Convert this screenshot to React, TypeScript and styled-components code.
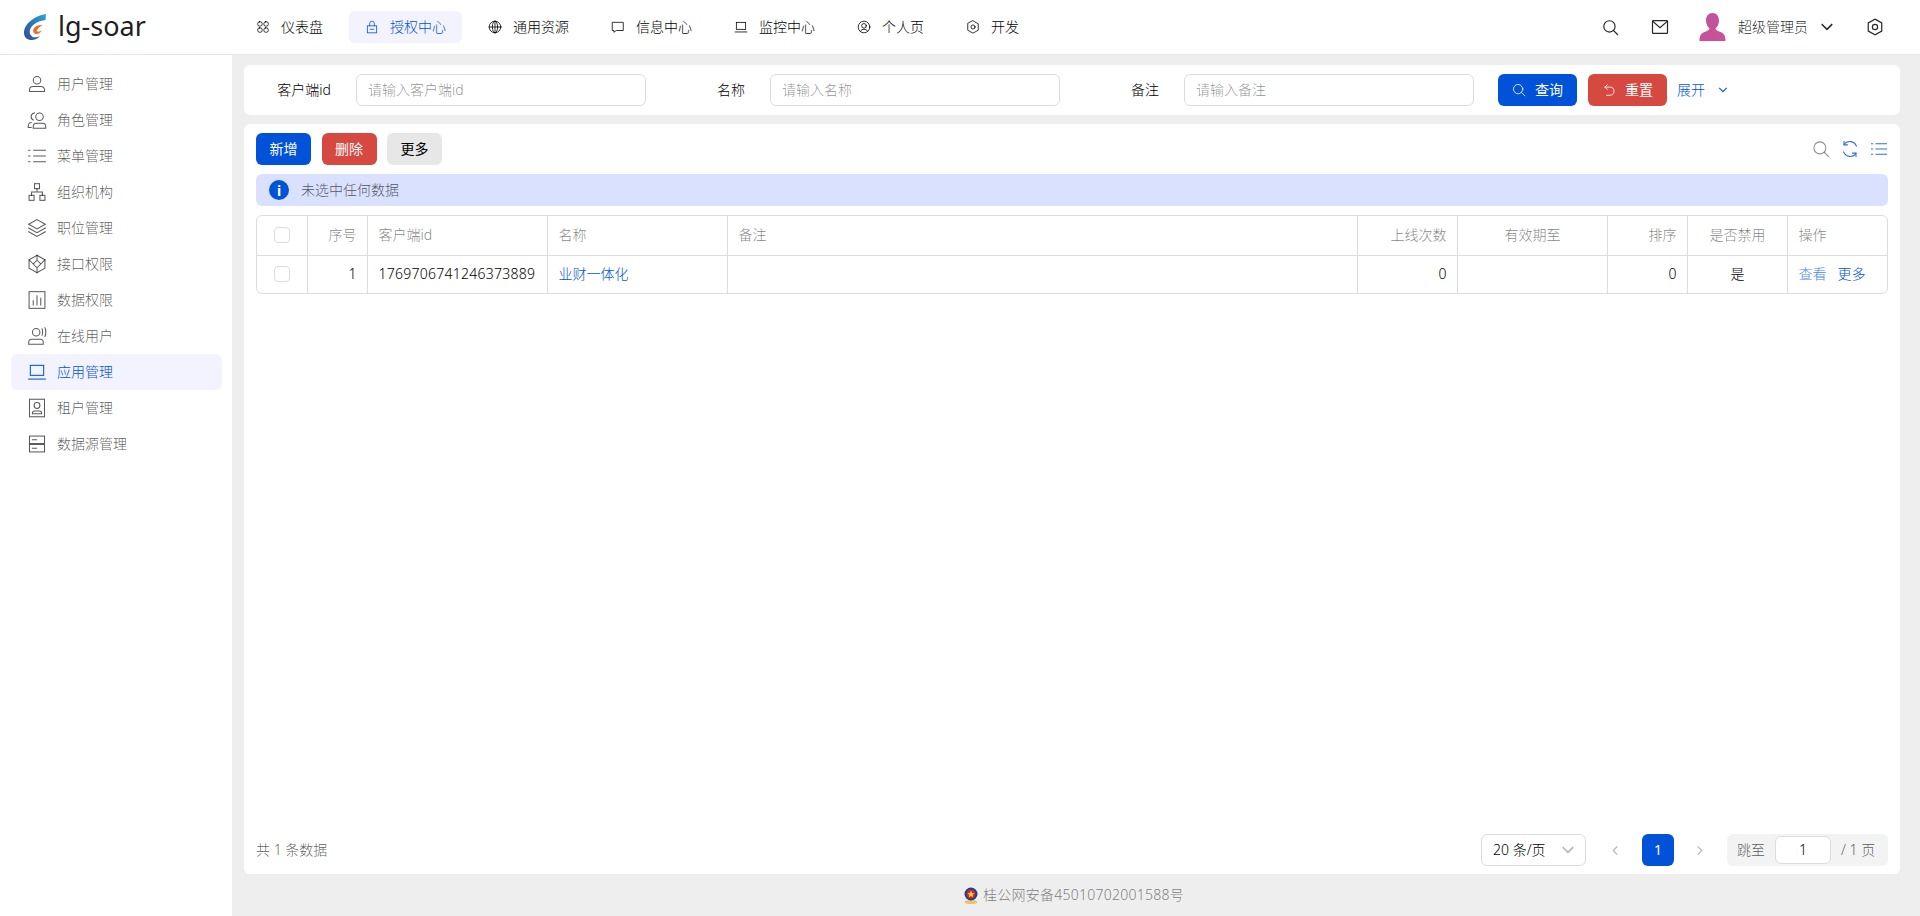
import React from 'react';
import styled, { createGlobalStyle } from 'styled-components';

const GlobalStyle = createGlobalStyle`
  html, body, #root { margin: 0; padding: 0; height: 100%; }
  body {
    font-family: "Noto Sans", "Noto Sans CJK SC", sans-serif;
    font-size: 14px;
    font-weight: 300;
    color: #000;
    background: #eeeeee;
    overflow: hidden;
  }
  * { box-sizing: border-box; }
`;

const Glyph = styled.svg<{ $size?: number }>`
  width: ${({ $size }) => $size ?? 16}px;
  height: ${({ $size }) => $size ?? 16}px;
  flex: none;
  fill: none;
  stroke: currentColor;
  stroke-width: 1.4;
  stroke-linecap: square;
  stroke-linejoin: miter;
`;

type IconName =
  | 'dashboard' | 'lock' | 'globe' | 'chat' | 'laptop' | 'userCircle' | 'setting'
  | 'user' | 'users' | 'list' | 'tree' | 'layers' | 'cube' | 'chart' | 'online'
  | 'idCard' | 'server' | 'search' | 'mail' | 'down' | 'undo' | 'refresh' | 'left' | 'right';

const paths: Record<IconName, React.ReactNode> = {
  dashboard: (
    <>
      <rect x="3" y="3" width="7.5" height="7.5" rx="3" />
      <rect x="13.5" y="3" width="7.5" height="7.5" rx="3" />
      <rect x="3" y="13.5" width="7.5" height="7.5" rx="3" />
      <rect x="13.5" y="13.5" width="7.5" height="7.5" rx="3" />
    </>
  ),
  lock: (
    <>
      <rect x="4" y="10" width="16" height="12" />
      <path d="M8 10V6a4 4 0 0 1 8 0v4M9 16h6" />
    </>
  ),
  globe: (
    <>
      <circle cx="12" cy="12" r="10" />
      <ellipse cx="12" cy="12" rx="4.5" ry="10" />
      <path d="M2 12h20M12 2v20" />
    </>
  ),
  chat: <path d="M3 4h18v14H9l-4 3v-3H3z" />,
  laptop: (
    <>
      <rect x="4" y="4" width="16" height="12" />
      <path d="M2 20.5h20" />
    </>
  ),
  userCircle: (
    <>
      <circle cx="12" cy="12" r="10" />
      <circle cx="12" cy="10" r="4" />
      <path d="M6 19c1.5-2.5 3.5-3 6-3s4.500.5 6 3" />
    </>
  ),
  setting: (
    <>
      <path d="M12 1.500 21 6.500v11L12 22.500 3 17.500v-11z" />
      <circle cx="12" cy="12" r="3.500" />
    </>
  ),
  user: (
    <>
      <circle cx="12" cy="7.500" r="4.500" />
      <path d="M3 21v-2c0-2.500 2-4 4.500-4h9c2.500 0 4.500 1.500 4.500 4v2z" />
    </>
  ),
  users: (
    <>
      <circle cx="15" cy="8" r="4.500" />
      <path d="M7.500 22v-2c0-2.500 2-4 4-4h7c2 0 4 1.500 4 4v2z" />
      <path d="M9 3.500A4.500 4.500 0 0 0 7.500 12M5 21H1.500v-2c0-2 1.500-4 3.500-4" />
    </>
  ),
  list: <path d="M8 5h14M8 12h14M8 19h14M2 5h1.500M2 12h1.500M2 19h1.500" />,
  tree: (
    <>
      <rect x="9" y="2" width="6" height="6" />
      <rect x="2.500" y="16" width="6" height="6" />
      <rect x="15.500" y="16" width="6" height="6" />
      <path d="M12 8v4M5.500 16v-4h13v4" />
    </>
  ),
  layers: (
    <>
      <path d="M12 2 22 7.500 12 13 2 7.500z" />
      <path d="M2 12l10 5.500L22 12M2 16.500 12 22l10-5.500" />
    </>
  ),
  cube: (
    <>
      <path d="M12 1.500 21.500 7v10L12 22.500 2.500 17V7z" />
      <path d="M12 7.500 16.500 12 12 16.500 7.500 12zM2.500 7 7.500 12M21.500 7 16.500 12M12 16.500v6M12 1.500v6" />
    </>
  ),
  chart: (
    <>
      <rect x="2.500" y="2" width="19" height="20" />
      <path d="M7.500 18v-5M12 18V7M16.500 18v-8" />
    </>
  ),
  online: (
    <>
      <circle cx="11" cy="7.500" r="4.500" />
      <path d="M2 22v-2c0-2.500 2-4 4-4h10c2 0 3.500 1.500 3.500 4v2z" />
      <path d="M18 3.500c1 1 1 6 0 7.500M21.500 2c1.500 2.500 1.500 8 0 10.500" />
    </>
  ),
  idCard: (
    <>
      <rect x="3" y="1.500" width="18" height="21" />
      <circle cx="12" cy="9" r="3.500" />
      <path d="M6.500 19v-1c0-1.500 1-2.500 2.500-2.500h6c1.500 0 2.500 1 2.500 2.500v1z" />
    </>
  ),
  server: (
    <>
      <rect x="3" y="2.500" width="18" height="9" />
      <rect x="3" y="12.500" width="18" height="9" />
      <path d="M6.500 7h5M6.500 17h5" />
    </>
  ),
  search: (
    <>
      <circle cx="10.500" cy="10.500" r="8" />
      <path d="m16.500 16.500 5.500 5.500" />
    </>
  ),
  mail: (
    <>
      <rect x="2" y="3.500" width="20" height="17" rx="1" />
      <path d="m3 5 9 8 9-8" />
    </>
  ),
  down: <path d="m4 8 8 8 8-8" strokeWidth="2.600" />,
  undo: <path d="M9 3 5 7l4 4M5 7h8.500a6.500 6.500 0 0 1 0 14H8" />,
  refresh: (
    <>
      <path d="M20.500 8A9.500 9.500 0 0 0 4 6M3.500 16A9.500 9.500 0 0 0 20 18" />
      <path d="M4 2v4.500h4.500M20 22v-4.500h-4.500" />
    </>
  ),
  left: <path d="M15 4 7 12l8 8" strokeWidth="2.400" />,
  right: <path d="m9 4 8 8-8 8" strokeWidth="2.400" />,
};

const Icon = ({ name, size }: { name: IconName; size?: number }) => (
  <Glyph viewBox="0 0 24 24" $size={size}>
    {paths[name]}
  </Glyph>
);

const navItems: { label: string; icon: IconName; active?: boolean }[] = [
  { label: '仪表盘', icon: 'dashboard' },
  { label: '授权中心', icon: 'lock', active: true },
  { label: '通用资源', icon: 'globe' },
  { label: '信息中心', icon: 'chat' },
  { label: '监控中心', icon: 'laptop' },
  { label: '个人页', icon: 'userCircle' },
  { label: '开发', icon: 'setting' },
];

const menuItems: { label: string; icon: IconName; active?: boolean }[] = [
  { label: '用户管理', icon: 'user' },
  { label: '角色管理', icon: 'users' },
  { label: '菜单管理', icon: 'list' },
  { label: '组织机构', icon: 'tree' },
  { label: '职位管理', icon: 'layers' },
  { label: '接口权限', icon: 'cube' },
  { label: '数据权限', icon: 'chart' },
  { label: '在线用户', icon: 'online' },
  { label: '应用管理', icon: 'laptop', active: true },
  { label: '租户管理', icon: 'idCard' },
  { label: '数据源管理', icon: 'server' },
];

const searchFields = [
  { label: '客户端id', placeholder: '请输入客户端id' },
  { label: '名称', placeholder: '请输入名称' },
  { label: '备注', placeholder: '请输入备注' },
];

type Align = 'left' | 'right' | 'center';

const columns: { title: string; width: number; align: Align }[] = [
  { title: '序号', width: 60, align: 'right' },
  { title: '客户端id', width: 180, align: 'left' },
  { title: '名称', width: 180, align: 'left' },
  { title: '备注', width: 630, align: 'left' },
  { title: '上线次数', width: 100, align: 'right' },
  { title: '有效期至', width: 150, align: 'center' },
  { title: '排序', width: 80, align: 'right' },
  { title: '是否禁用', width: 100, align: 'center' },
  { title: '操作', width: 100, align: 'left' },
];

const Page = styled.div`
  height: 100vh;
  display: flex;
  flex-direction: column;
`;

// the CJK glyphs sit a little low in their line box, this lifts them next to icons
const Txt = styled.span`
  margin-top: -2px;
  white-space: nowrap;
`;

const Header = styled.header`
  height: 55px;
  flex: none;
  display: flex;
  align-items: center;
  background: #fff;
  border-bottom: 1px solid #e7e7e7;
`;

const Logo = styled.div`
  width: 240px;
  flex: none;
  display: flex;
  align-items: center;
  gap: 12px;
  padding-left: 24px;
`;

const LogoText = styled(Txt)`
  font-size: 27px;
  font-weight: 400;
  line-height: 34px;
  color: rgba(0, 0, 0, 0.9);
`;

const Nav = styled.nav`
  flex: 1;
  display: flex;
  gap: 10px;
  svg { stroke-width: 1.35; }
`;

const NavItem = styled.div<{ $active?: boolean }>`
  height: 32px;
  display: flex;
  align-items: center;
  gap: 11px;
  padding: 0 16px;
  border-radius: 6px;
  background: ${({ $active }) => ($active ? '#f2f3ff' : 'transparent')};
  color: ${({ $active }) => ($active ? '#0052d9' : '#000')};
`;

const HeaderTools = styled.div`
  display: flex;
  align-items: center;
  padding-right: 36px;
  color: rgba(0, 0, 0, 0.85);
  svg { stroke-width: 1.6; }
`;

const ToolSlot = styled.span<{ $gap: number }>`
  display: flex;
  margin-right: ${({ $gap }) => $gap}px;
`;

const Profile = styled.div`
  display: flex;
  align-items: center;
  gap: 12px;
  margin-right: 32px;
`;

const Body = styled.div`
  flex: 1;
  min-height: 0;
  display: flex;
`;

const Sidebar = styled.aside`
  width: 232px;
  flex: none;
  background: #fff;
  padding: 11px 10px 0 11px;
  svg { stroke-width: 1.25; }
`;

const MenuItem = styled.div<{ $active?: boolean }>`
  height: 36px;
  display: flex;
  align-items: center;
  gap: 10px;
  padding-left: 16px;
  border-radius: 6px;
  background: ${({ $active }) => ($active ? '#f2f3ff' : 'transparent')};
  color: ${({ $active }) => ($active ? '#0052d9' : 'rgba(0, 0, 0, 0.65)')};
`;

const Main = styled.main`
  flex: 1;
  min-width: 0;
  display: flex;
  flex-direction: column;
  padding: 10px 20px 0 12px;
`;

const Card = styled.section`
  background: #fff;
  border-radius: 6px;
`;

const SearchCard = styled(Card)`
  height: 50px;
  flex: none;
  display: flex;
  align-items: center;
  padding: 0 12px;
  margin-bottom: 9px;
`;

const Field = styled.div`
  width: 414px;
  flex: none;
  display: flex;
  align-items: center;
`;

const FieldLabel = styled(Txt)`
  width: 100px;
  padding-right: 25px;
  text-align: right;
`;

const TextBox = styled.div`
  width: 290px;
  height: 32px;
  display: flex;
  align-items: center;
  padding: 0 11px;
  border: 1px solid #dcdcdc;
  border-radius: 6px;
  color: rgba(0, 0, 0, 0.45);
`;

const Button = styled.button<{ $tone?: 'primary' | 'danger' | 'plain' }>`
  height: 32px;
  display: inline-flex;
  align-items: center;
  justify-content: center;
  gap: 9px;
  padding: 0;
  border: 0;
  border-radius: 6px;
  font: inherit;
  font-weight: 400;
  background: ${({ $tone }) => ($tone === 'primary' ? '#0052d9' : $tone === 'danger' ? '#d54941' : '#e7e7e7')};
  color: ${({ $tone }) => ($tone === 'plain' ? '#000' : '#fff')};
`;

const SearchButton = styled(Button)`
  width: 79px;
  & + & { margin-left: 11px; }
`;

const Expand = styled.div`
  display: flex;
  align-items: center;
  gap: 13px;
  margin-left: 10px;
  color: #0052d9;
`;

const TableCard = styled(Card)`
  flex: 1;
  min-height: 0;
  display: flex;
  flex-direction: column;
  padding: 9px 12px 8px;
`;

const Toolbar = styled.div`
  height: 32px;
  display: flex;
  align-items: center;
  gap: 10.5px;
  margin-bottom: 9px;
`;

const ToolButton = styled(Button)`
  width: 55px;
`;

const TableTools = styled.div`
  margin-left: auto;
  display: flex;
  align-items: center;
  gap: 11px;
  color: #2f6fe0;
`;

const MutedIcon = styled.span`
  display: flex;
  color: rgba(0, 0, 0, 0.45);
`;

const Notice = styled.div`
  height: 32px;
  display: flex;
  align-items: center;
  gap: 12px;
  padding-left: 13px;
  margin-bottom: 9px;
  border-radius: 6px;
  background: #d9e1ff;
  color: rgba(0, 0, 0, 0.65);
`;

const InfoDot = styled.span`
  width: 20px;
  height: 20px;
  border-radius: 50%;
  display: flex;
  align-items: center;
  justify-content: center;
  background: #0052d9;
  color: #fff;
  font-size: 14px;
  font-weight: 700;
`;

const TableWrap = styled.div`
  border: 1px solid #dcdcdc;
  border-radius: 6px;
  overflow: hidden;
`;

const Table = styled.table`
  width: 100%;
  table-layout: fixed;
  border-collapse: collapse;
`;

const HeadCell = styled.th<{ $align?: Align }>`
  height: 39px;
  padding: 0 10px 2px 11px;
  font-weight: 300;
  text-align: ${({ $align }) => $align ?? 'left'};
  color: rgba(0, 0, 0, 0.5);
  border-left: 1px solid #dcdcdc;
  border-bottom: 1px solid #dcdcdc;
  &:first-child { border-left: 0; }
`;

const Cell = styled.td<{ $align?: Align }>`
  height: 38px;
  padding: 0 10px 2px 11px;
  text-align: ${({ $align }) => $align ?? 'left'};
  white-space: nowrap;
  border-left: 1px solid #dcdcdc;
  &:first-child { border-left: 0; }
`;

const Digits = styled.span`
  letter-spacing: 0.25px;
`;

const Check = styled.span`
  display: block;
  width: 16px;
  height: 16px;
  margin: 2px auto 0;
  border: 1px solid #dcdcdc;
  border-radius: 4px;
  background: #fff;
`;

const LinkText = styled.a<{ $light?: boolean }>`
  color: ${({ $light }) => ($light ? '#4787f0' : '#0052d9')};
  & + & { margin-left: 11px; }
`;

const Pagination = styled.div`
  margin-top: auto;
  height: 32px;
  display: flex;
  align-items: center;
  color: rgba(0, 0, 0, 0.65);
`;

const Total = styled(Txt)`
  margin-right: auto;
`;

const SizeSelect = styled.div`
  width: 105px;
  height: 32px;
  display: flex;
  align-items: center;
  justify-content: space-between;
  padding: 0 10px 0 11px;
  border: 1px solid #dcdcdc;
  border-radius: 6px;
  color: #000;
`;

const Arrow = styled.span`
  display: flex;
  color: rgba(0, 0, 0, 0.3);
`;

const PrevArrow = styled(Arrow)`
  margin-left: 24px;
`;

const PageNo = styled.span`
  width: 32px;
  height: 32px;
  margin: 0 20px 0 21px;
  display: flex;
  align-items: center;
  justify-content: center;
  border-radius: 6px;
  background: #0052d9;
  color: #fff;
  font-weight: 400;
`;

const Jumper = styled.div`
  width: 161px;
  height: 32px;
  margin-left: 22px;
  display: flex;
  align-items: center;
  padding: 0 10px;
  gap: 10px;
  border-radius: 6px;
  background: #f3f3f3;
`;

const JumpInput = styled.span`
  width: 56px;
  height: 28px;
  display: flex;
  align-items: center;
  justify-content: center;
  background: #fff;
  border: 1px solid #dcdcdc;
  border-radius: 6px;
  color: #000;
`;

const Footer = styled.footer`
  height: 42px;
  flex: none;
  display: flex;
  align-items: center;
  justify-content: center;
  gap: 5px;
  padding-left: 4px;
  color: rgba(0, 0, 0, 0.5);
`;

const LogoMark = () => (
  <svg width="22" height="26" viewBox="0 0 22 26">
    <defs>
      <linearGradient id="logoBlue" x1="1" y1="0" x2="0" y2="1">
        <stop offset="0" stopColor="#27a5dc" />
        <stop offset="0.6" stopColor="#2a6db4" />
        <stop offset="1" stopColor="#3b4a94" />
      </linearGradient>
    </defs>
    <path d="M22 0C10 2 0 10 0 19c0 4.500 3.500 7 7.500 7 3.500 0 6.500-1.500 8.500-4-2.500 1.200-6 2-8 .5-2.500-2-3-5-1.500-8C9 9.500 15 7 21.500 6z" fill="url(#logoBlue)" />
    <path d="M19 11c-4-.5-8 .5-9.500 4-1 2.500.5 5 3 5 2.500 0 4-1.500 5-3.500-1.500 1-3.500 1.500-5 .8 1-3 3.500-5 6.500-6.300z" fill="#ef6b2d" />
  </svg>
);

const Avatar = () => (
  <svg width="27" height="28" viewBox="0 0 26 28">
    <defs>
      <linearGradient id="avatarFill" x1="0" y1="0" x2="1" y2="1">
        <stop offset="0" stopColor="#b9559c" />
        <stop offset="1" stopColor="#d04f9a" />
      </linearGradient>
    </defs>
    <path d="M13 0c4 0 6.500 3 6.500 7.500 0 3.500-1.500 6.500-3.500 8 .5 1.500 2 2.500 5 3.500 3 1 5 3 5 9H0c0-6 2-8 5-9 3-1 4.500-2 5-3.500-2-1.500-3.500-4.500-3.500-8C6.500 3 9 0 13 0z" fill="url(#avatarFill)" />
  </svg>
);

const PoliceBadge = () => (
  <svg width="14" height="17" viewBox="0 0 14 17">
    <ellipse cx="7" cy="15" rx="6.500" ry="2" fill="#e5c46b" />
    <circle cx="7" cy="7" r="6.500" fill="#1c3f8f" />
    <circle cx="7" cy="7" r="4.500" fill="#d52b1e" />
    <path d="M7 3.500 8 6l2.500.2-2 1.600.7 2.500L7 9l-2.200 1.300.7-2.500-2-1.600L6 6z" fill="#f6d24a" />
  </svg>
);

export default function App() {
  return (
    <Page>
      <GlobalStyle />
      <Header>
        <Logo>
          <LogoMark />
          <LogoText>lg-soar</LogoText>
        </Logo>
        <Nav>
          {navItems.map(item => (
            <NavItem key={item.label} $active={item.active}>
              <Icon name={item.icon} size={14} />
              <Txt>{item.label}</Txt>
            </NavItem>
          ))}
        </Nav>
        <HeaderTools>
          <ToolSlot $gap={32}><Icon name="search" size={17} /></ToolSlot>
          <ToolSlot $gap={30}><Icon name="mail" size={18} /></ToolSlot>
          <Profile>
            <Avatar />
            <Txt>超级管理员</Txt>
            <Icon name="down" size={14} />
          </Profile>
          <Icon name="setting" size={18} />
        </HeaderTools>
      </Header>
      <Body>
        <Sidebar>
          {menuItems.map(item => (
            <MenuItem key={item.label} $active={item.active}>
              <Icon name={item.icon} size={20} />
              <Txt>{item.label}</Txt>
            </MenuItem>
          ))}
        </Sidebar>
        <Main>
          <SearchCard>
            {searchFields.map(field => (
              <Field key={field.label}>
                <FieldLabel>{field.label}</FieldLabel>
                <TextBox><Txt>{field.placeholder}</Txt></TextBox>
              </Field>
            ))}
            <SearchButton $tone="primary"><Icon name="search" size={14} /><Txt>查询</Txt></SearchButton>
            <SearchButton $tone="danger"><Icon name="undo" size={14} /><Txt>重置</Txt></SearchButton>
            <Expand><Txt>展开</Txt><Icon name="down" size={10} /></Expand>
          </SearchCard>
          <TableCard>
            <Toolbar>
              <ToolButton $tone="primary"><Txt>新增</Txt></ToolButton>
              <ToolButton $tone="danger"><Txt>删除</Txt></ToolButton>
              <ToolButton $tone="plain"><Txt>更多</Txt></ToolButton>
              <TableTools>
                <MutedIcon><Icon name="search" size={18} /></MutedIcon>
                <Icon name="refresh" size={18} />
                <Icon name="list" size={18} />
              </TableTools>
            </Toolbar>
            <Notice>
              <InfoDot>i</InfoDot>
              <Txt>未选中任何数据</Txt>
            </Notice>
            <TableWrap>
              <Table>
                <colgroup>
                  <col style={{ width: 50 }} />
                  {columns.map(col => (
                    <col key={col.title} style={{ width: col.width }} />
                  ))}
                </colgroup>
                <thead>
                  <tr>
                    <HeadCell $align="center"><Check /></HeadCell>
                    {columns.map(col => (
                      <HeadCell key={col.title} $align={col.align}>{col.title}</HeadCell>
                    ))}
                  </tr>
                </thead>
                <tbody>
                  <tr>
                    <Cell $align="center"><Check /></Cell>
                    <Cell $align="right">1</Cell>
                    <Cell><Digits>1769706741246373889</Digits></Cell>
                    <Cell><LinkText>业财一体化</LinkText></Cell>
                    <Cell />
                    <Cell $align="right">0</Cell>
                    <Cell />
                    <Cell $align="right">0</Cell>
                    <Cell $align="center">是</Cell>
                    <Cell>
                      <LinkText $light>查看</LinkText>
                      <LinkText>更多</LinkText>
                    </Cell>
                  </tr>
                </tbody>
              </Table>
            </TableWrap>
            <Pagination>
              <Total>共 1 条数据</Total>
              <SizeSelect>
                <Txt>20 条/页</Txt>
                <Arrow><Icon name="down" size={14} /></Arrow>
              </SizeSelect>
              <PrevArrow><Icon name="left" size={11} /></PrevArrow>
              <PageNo><Txt>1</Txt></PageNo>
              <Arrow><Icon name="right" size={11} /></Arrow>
              <Jumper>
                <Txt>跳至</Txt>
                <JumpInput><Txt>1</Txt></JumpInput>
                <Txt>/ 1 页</Txt>
              </Jumper>
            </Pagination>
          </TableCard>
          <Footer>
            <PoliceBadge />
            <Txt><Digits>桂公网安备45010702001588号</Digits></Txt>
          </Footer>
        </Main>
      </Body>
    </Page>
  );
}
